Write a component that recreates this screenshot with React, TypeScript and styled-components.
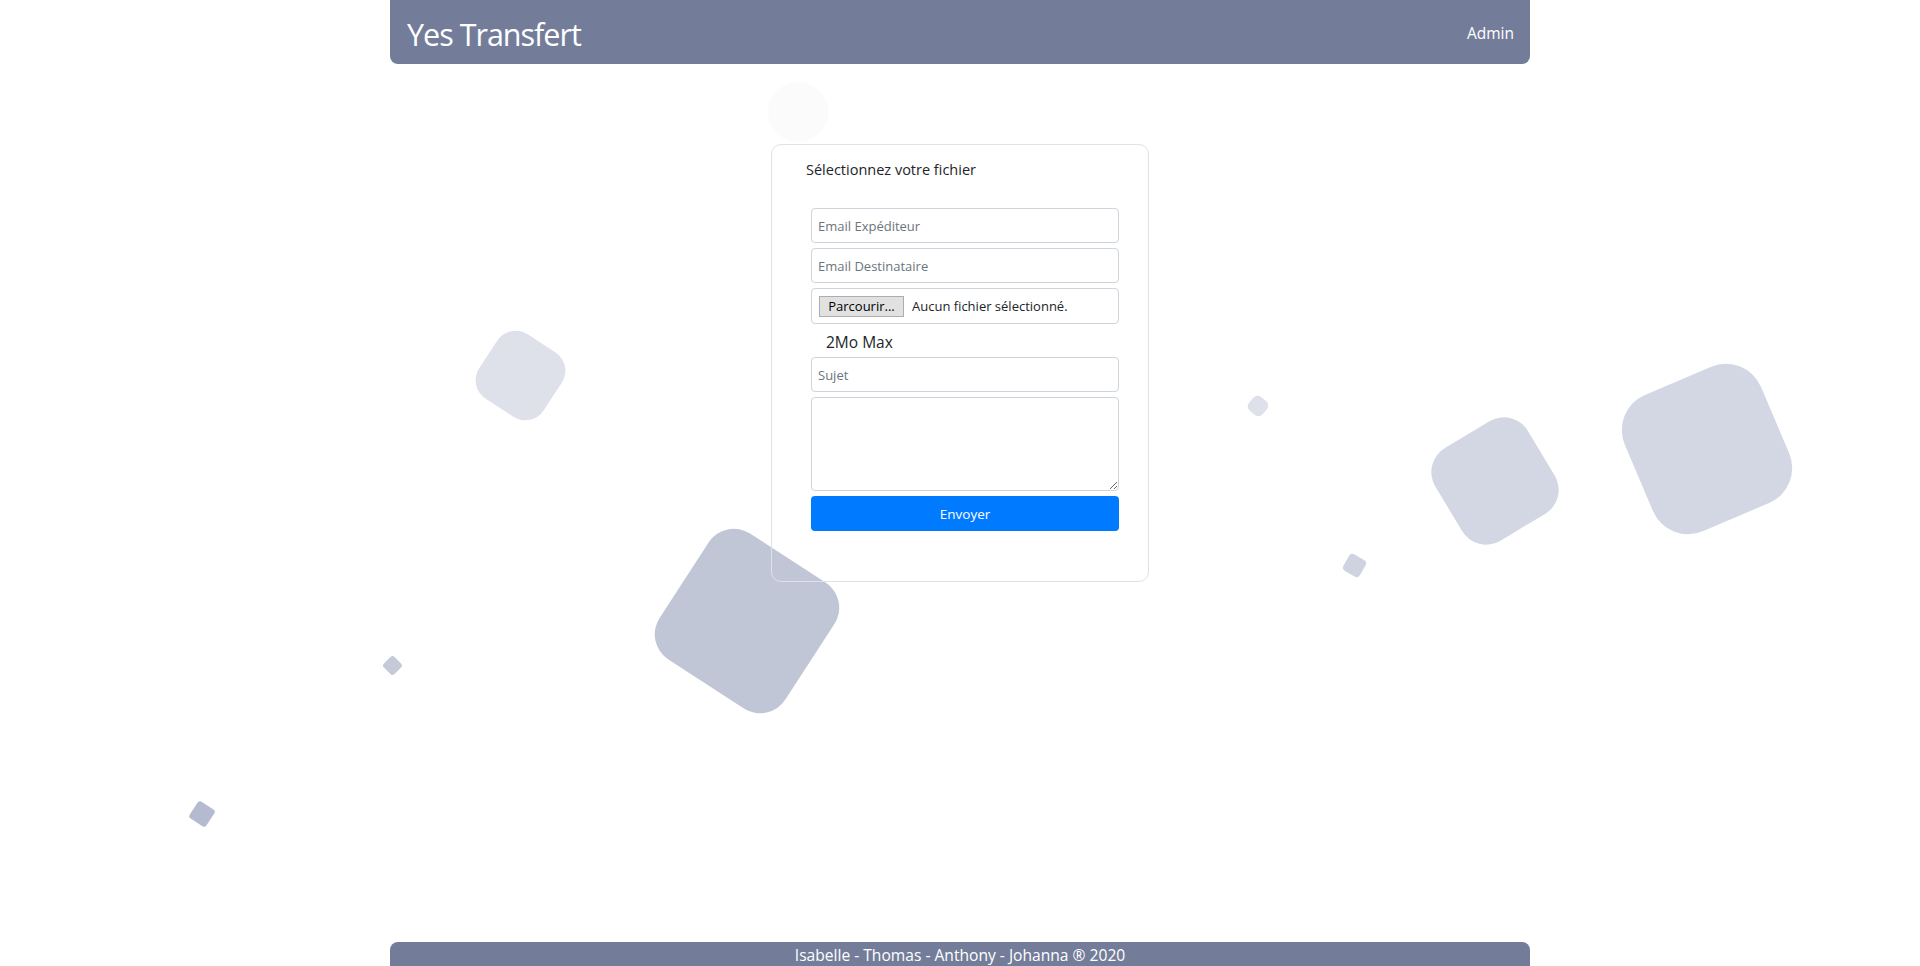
import React from "react";
import styled, { createGlobalStyle } from "styled-components";

const GlobalStyle = createGlobalStyle`
  html, body {
    margin: 0;
    padding: 0;
    background: #ffffff;
  }
  body {
    font-family: "Open Sans", "Noto Sans", "Liberation Sans", sans-serif;
    color: #212529;
  }
  * { box-sizing: border-box; }
`;

const Page = styled.div`
  position: relative;
  min-height: 100vh;
  display: flex;
  flex-direction: column;
  overflow: hidden;
`;

const Backdrop = styled.ul`
  position: absolute;
  inset: 0;
  margin: 0;
  padding: 0;
  list-style: none;
  overflow: hidden;
  z-index: 0;
`;

const Shape = styled.li<{ $x: number; $y: number; $s: number; $r: string; $rot: number; $c: string }>`
  position: absolute;
  display: block;
  left: ${(p) => p.$x - p.$s / 2}px;
  top: ${(p) => p.$y - p.$s / 2}px;
  width: ${(p) => p.$s}px;
  height: ${(p) => p.$s}px;
  border-radius: ${(p) => p.$r};
  background: ${(p) => p.$c};
  transform: rotate(${(p) => p.$rot}deg);
`;

const Header = styled.header`
  position: relative;
  z-index: 1;
  width: 1140px;
  height: 64px;
  margin: 0 auto;
  padding: 0 16px 0 17px;
  background: #737d9a;
  border-radius: 0 0 8px 8px;
  display: flex;
  align-items: center;
  justify-content: space-between;
  color: #ffffff;
`;

const Brand = styled.div`
  font-size: 30.5px;
  line-height: 1;
  letter-spacing: -1px;
  padding-top: 4px;
`;

const NavLink = styled.a`
  font-size: 15.5px;
  color: #ffffff;
  text-decoration: none;
  padding-top: 2px;
`;

const Main = styled.main`
  position: relative;
  z-index: 1;
  flex: 1;
  display: flex;
  justify-content: center;
  align-items: flex-start;
  padding-top: 80px;
`;

const Card = styled.section`
  width: 378px;
  height: 438px;
  border: 1px solid #dfe2e6;
  border-radius: 10px;
  background: transparent;
  padding: 13px 29px 0 34px;
`;

const Title = styled.h2`
  margin: 0 0 26px 0;
  font-size: 14.5px;
  font-weight: 400;
  line-height: 24px;
  color: #212529;
`;

const Form = styled.form`
  display: flex;
  flex-direction: column;
  gap: 5px;
  margin-left: 5px;
`;

const Input = styled.input`
  display: block;
  width: 100%;
  height: 35px;
  padding: 0 6px;
  border: 1px solid #ced4da;
  border-radius: 4px;
  background: #ffffff;
  font-family: inherit;
  font-size: 13px;
  color: #495057;
  outline: none;
  &::placeholder {
    color: #6c757d;
  }
`;

const FileBox = styled.label`
  display: flex;
  align-items: center;
  gap: 8px;
  height: 36px;
  padding: 0 7px;
  border: 1px solid #ced4da;
  border-radius: 4px;
  background: #ffffff;
  font-size: 13px;
  color: #212529;
  cursor: pointer;
  input { display: none; }
`;

const FileButton = styled.span`
  display: inline-flex;
  align-items: center;
  justify-content: center;
  width: 85px;
  height: 21px;
  background: #e1e1e1;
  border: 1px solid #adadad;
  font-size: 13px;
  color: #000000;
`;

const Hint = styled.div`
  height: 23px;
  padding: 1px 0 0 15px;
  font-size: 15.5px;
  line-height: 24px;
  color: #212529;
`;

const TextArea = styled.textarea`
  display: block;
  width: 100%;
  height: 94px;
  padding: 6px;
  border: 1px solid #ced4da;
  border-radius: 4px;
  font-family: inherit;
  font-size: 13px;
  resize: both;
  outline: none;
`;

const SubmitButton = styled.button`
  height: 35px;
  border: none;
  border-radius: 4px;
  background: #007bff;
  color: #ffffff;
  font-family: inherit;
  font-size: 13.5px;
  cursor: pointer;
`;

const Footer = styled.footer`
  position: relative;
  z-index: 1;
  width: 1140px;
  height: 24px;
  margin: 0 auto;
  background: #737d9a;
  border-radius: 8px 8px 0 0;
  color: #ffffff;
  font-size: 15.6px;
  line-height: 26px;
  text-align: center;
`;

const shapes = [
  { x: 798, y: 112, s: 60, r: "50%", rot: 0, c: "#fbfbfc" },
  { x: 520, y: 375.5, s: 77, r: "22px", rot: 33, c: "#dfe1ea" },
  { x: 747, y: 621, s: 150, r: "30px", rot: 33, c: "#c1c6d6" },
  { x: 392, y: 665.5, s: 15, r: "3px", rot: 45, c: "#c5c9d8" },
  { x: 202, y: 814, s: 20, r: "3px", rot: 33, c: "#b4bacf" },
  { x: 1258, y: 405.5, s: 18, r: "6px", rot: 40, c: "#dfe1ea" },
  { x: 1495, y: 480.5, s: 108, r: "28px", rot: -31, c: "#d3d7e3" },
  { x: 1707, y: 449, s: 148, r: "38px", rot: -23, c: "#d3d7e3" },
  { x: 1354.5, y: 565, s: 19, r: "4px", rot: 30, c: "#cfd3e0" },
];

export default function App() {
  return (
    <>
      <GlobalStyle />
      <Page>
        <Backdrop>
          {shapes.map((sh, i) => (
            <Shape key={i} $x={sh.x} $y={sh.y} $s={sh.s} $r={sh.r} $rot={sh.rot} $c={sh.c} />
          ))}
        </Backdrop>
        <Header>
          <Brand>Yes Transfert</Brand>
          <NavLink href="#">Admin</NavLink>
        </Header>
        <Main>
          <Card>
            <Title>Sélectionnez votre fichier</Title>
            <Form onSubmit={(e) => e.preventDefault()}>
              <Input type="email" placeholder="Email Expéditeur" />
              <Input type="email" placeholder="Email Destinataire" />
              <FileBox>
                <input type="file" />
                <FileButton>Parcourir...</FileButton>
                <span>Aucun fichier sélectionné.</span>
              </FileBox>
              <Hint>2Mo Max</Hint>
              <Input type="text" placeholder="Sujet" />
              <TextArea />
              <SubmitButton type="submit">Envoyer</SubmitButton>
            </Form>
          </Card>
        </Main>
        <Footer>Isabelle - Thomas - Anthony - Johanna ® 2020</Footer>
      </Page>
    </>
  );
}
